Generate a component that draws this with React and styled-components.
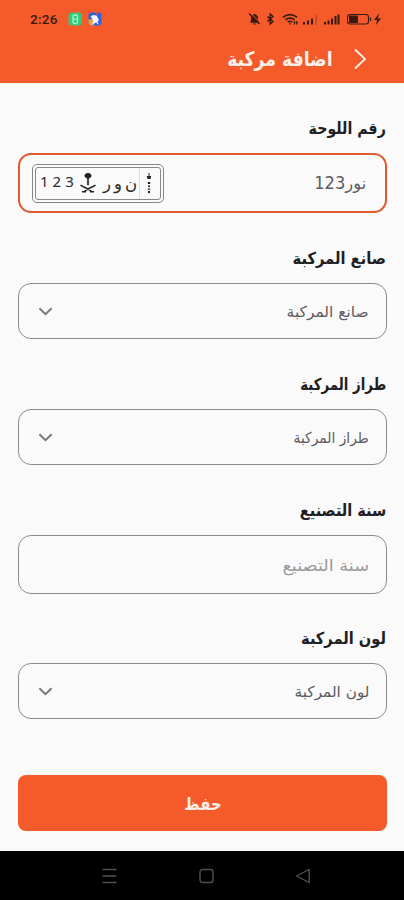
import styled, { createGlobalStyle } from 'styled-components';

const GlobalStyle = createGlobalStyle`
  * {
    box-sizing: border-box;
  }

  body {
    margin: 0;
    background-color: #fafafa;
    font-family: 'DejaVu Sans', sans-serif;
  }

  svg {
    display: block;
    flex-shrink: 0;
  }
`;

const Screen = styled.div`
  display: flex;
  flex-direction: column;
  width: 404px;
  height: 900px;
  overflow: hidden;
  background-color: #fafafa;
`;

const Header = styled.header`
  height: 83px;
  background-color: #f55a2a;
`;

const StatusBar = styled.div`
  display: flex;
  justify-content: space-between;
  height: 36px;
  padding: 1px 21px 0 30px;
`;

const StatusGroup = styled.div`
  display: flex;
  align-items: center;
`;

const Clock = styled.span`
  width: 38px;
  font-family: Roboto, sans-serif;
  font-size: 13.5px;
  font-weight: 500;
  letter-spacing: 0.3px;
  color: #3a1a10;
`;

const TitleRow = styled.div`
  display: flex;
  align-items: center;
  gap: 20px;
  height: 45px;
  padding-right: 37px;
  direction: rtl;
`;

const Text = styled.span`
  display: inline-block;
  white-space: nowrap;
  transform: scaleX(${props => props.$stretch || 1});
  transform-origin: ${props => props.$origin || 'right'} center;
`;

const Title = styled.h1`
  margin: 0;
  font-size: 20px;
  font-weight: 700;
  line-height: 28px;
  color: #fff0ea;
`;

const Form = styled.form`
  display: flex;
  flex-direction: column;
  gap: 33px;
  height: 768px;
  padding: 33px 17px 0 18px;
  direction: rtl;
`;

const Group = styled.div`
  display: flex;
  flex-direction: column;
  gap: 13px;
`;

const Label = styled.label`
  height: 24px;
  padding-right: 1px;
  font-size: 16.5px;
  font-weight: 700;
  line-height: 26px;
  color: #202022;
`;

const Field = styled.div`
  display: flex;
  align-items: center;
  justify-content: space-between;
  height: ${props => props.$height || 56}px;
  padding: 1px 17px 0 19px;
  border: ${props => (props.$active ? '2px solid #e0592f' : '1px solid #8c8c90')};
  border-radius: 13px;
  font-size: ${props => (props.$muted ? 16 : 15)}px;
  color: ${props => (props.$muted ? '#98989c' : '#5c5c60')};
`;

const PlateField = styled(Field)`
  padding: 0 19px 0 12px;
  font-size: 17px;
`;

const YearGroup = styled(Group)`
  margin-bottom: -1px;
`;

const Plate = styled.div`
  width: 132px;
  height: 39px;
  padding: 2px;
  border: 1.5px solid #858585;
  border-radius: 5px;
`;

const PlateInner = styled.div`
  display: flex;
  align-items: center;
  height: 100%;
  border: 1px solid #888;
  border-radius: 3px;
  direction: ltr;
  color: #2c2c2c;
`;

const PlateDigits = styled.span`
  width: 43px;
  padding: 0 0 4px 4px;
  font-family: 'Noto Sans', sans-serif;
  font-size: 15px;
  letter-spacing: 4px;
`;

const PlateLetters = styled.span`
  display: flex;
  justify-content: center;
  gap: 3px;
  width: 42px;
  padding-left: 4px;
  font-size: 16.5px;
  direction: rtl;
`;

const PlateStrip = styled.div`
  display: flex;
  align-items: center;
  justify-content: center;
  width: 19px;
  height: 100%;
  border-left: 1px solid #ddd;
`;

const SaveButton = styled.button`
  height: 56px;
  margin-top: 23px;
  padding: 1px 0 0;
  border: 0;
  border-radius: 8px;
  background-color: #f55a2a;
  font-family: inherit;
  font-size: 17.5px;
  font-weight: 700;
  color: #fff0ea;
`;

const NavBar = styled.nav`
  display: flex;
  align-items: center;
  justify-content: space-between;
  height: 49px;
  padding: 0 93px 0 102px;
  background-color: #000;
`;

const Chevron = () => (
  <svg width="15" height="9" viewBox="0 0 15 9" fill="none" stroke="#77777b" strokeWidth="1.9">
    <path d="M1.4 1.2 7.5 7.2 13.6 1.2" />
  </svg>
);

const StatusIcons = () => (
  <svg width="136" height="18" viewBox="0 0 136 18" fill="none" stroke="#3a1a10">
    <path d="M3.5 12.2c1-1.4 1-2 1-4 0-2.2 1.2-3.7 3-3.7s3 1.5 3 3.7c0 2 0 2.6 1.2 4zM6.2 14h2.6" fill="#3a1a10" strokeWidth="1" />
    <path d="M3.5 3 14 13.5" stroke="#f55a2a" strokeWidth="1" />
    <path d="M2 3.5 12.5 14" strokeWidth="1.4" />
    <path d="M20.5 6.5 26 11.5 23.2 14V4L26 6.5 20.5 11.5" strokeWidth="1.4" />
    <g transform="translate(2 0)">
      <path d="M34 7.2q7-5.2 14 0M36.500 9.700q4.500-3.300 9 0M38.800 12q2.200-1.500 4.400 0" strokeWidth="1.7" />
      <path d="M41 14.5V13M45.500 11v3.500M47.800 11v3.500" strokeWidth="1.3" />
      <path d="M55 14.500V12M59 14.500v-4M63 14.500v-6" strokeWidth="2" />
      <path d="M67 14.500v-10" strokeWidth="1.5" opacity=".3" />
      <path d="M76 14.500V12M79.500 14.500v-4M83 14.500v-6M86.500 14.500V6M89.500 14.500v-10" strokeWidth="2" />
      <rect x="98.500" y="4.500" width="21" height="9.500" rx="2.500" strokeWidth="1.1" />
      <path d="M100 5.500h9V13h-9z" fill="#3a1a10" stroke="none" />
      <path d="M121.500 7.500V11" strokeWidth="1.2" />
      <path d="M130 3.500 125 10h3l-1 5 5-6.500h-3z" fill="#3a1a10" stroke="none" />
    </g>
  </svg>
);

const AppBadges = () => (
  <svg width="34" height="14" viewBox="0 0 34 14">
    <rect x="0.5" y="0.5" width="13.5" height="13" rx="3.5" fill="#2fcb78" />
    <rect x="5" y="3" width="4.5" height="8.5" rx="1.5" fill="none" stroke="#b4f0cc" strokeWidth="1.3" />
    <path d="M5 7.2h4.5" stroke="#b4f0cc" />
    <rect x="20.5" y="0.5" width="13" height="13" rx="3" fill="#2f62dc" />
    <path d="M20.5 7.5 25 7l1 6.500h-2.500a3 3 0 0 1-3-3z" fill="#e8a13c" />
    <path d="M22.500 4.500 25 3l3.500.5L31 8l-1.500 1.500 1.500 3.500-3-2.500-3.500 2 .5-4.500z" fill="#f2f4ff" />
    <path d="M27 .5h3L28.500 3z" fill="#e84b4b" />
  </svg>
);

const Emblem = () => (
  <svg width="18" height="22" viewBox="0 0 18 22" fill="none" stroke="#222">
    <path d="M6 4.800c-.8-2 .8-3.500 3-3.500s3.800 1.500 3 3.500L9.600 6.500V13H8.400V6.500z" fill="#222" strokeWidth=".6" />
    <path d="M1.500 13c2.500 2.500 8 3 11.500 7M16.500 13c-2.500 2.500-8 3-11.500 7M3 19.800h4M15 19.800h-4" strokeWidth="1.5" />
  </svg>
);

const StripMark = () => (
  <svg width="8" height="24" viewBox="0 0 8 24" fill="#222">
    <path d="M3.500 2h1v3l1.700 0L5.500 8h-3L1.800 5h1.700z" />
    <path d="M2.800 11h2.400v2H2.800zM3 14.500h2V16H3zM2.800 17.500h2.400v1.300H2.800z" />
    <circle cx="4" cy="21" r="1.2" />
  </svg>
);

const NavMenu = () => (
  <svg width="16" height="16" viewBox="0 0 16 16" stroke="#505050" strokeWidth="1.7">
    <path d="M.5 1.500h14M.5 8h14M.5 14.500h14" />
  </svg>
);

const NavHome = () => (
  <svg width="16" height="16" viewBox="0 0 16 16" fill="none" stroke="#505050" strokeWidth="1.4">
    <rect x="1" y="1.5" width="13" height="13" rx="2.5" />
  </svg>
);

const NavBack = () => (
  <svg width="16" height="16" viewBox="0 0 16 16" fill="none" stroke="#505050" strokeWidth="1.4" strokeLinejoin="round">
    <path d="M14.200 1.500v13L1.500 8z" />
  </svg>
);

const SelectGroup = ({ text, stretch, innerStretch }) => (
  <Group>
    <Label><Text $stretch={stretch}>{text}</Text></Label>
    <Field>
      <Text $stretch={innerStretch}>{text}</Text>
      <Chevron />
    </Field>
  </Group>
);

const App = () => (
  <Screen>
    <GlobalStyle />
    <Header>
      <StatusBar>
        <StatusGroup>
          <Clock>2:26</Clock>
          <AppBadges />
        </StatusGroup>
        <StatusGroup>
          <StatusIcons />
        </StatusGroup>
      </StatusBar>
      <TitleRow>
        <svg width="14" height="22" viewBox="0 0 14 22" fill="none" stroke="#fff0e8" strokeWidth="1.8">
          <path d="M2 1.500 12 11 2 20.500" />
        </svg>
        <Title><Text $stretch={0.86}>اضافة مركبة</Text></Title>
      </TitleRow>
    </Header>
    <Form>
      <Group>
        <Label><Text $stretch={0.86}>رقم اللوحة</Text></Label>
        <PlateField $active $height={60}>
          <Text $stretch={0.96}>نور123</Text>
          <Plate>
            <PlateInner>
              <PlateDigits>123</PlateDigits>
              <Emblem />
              <PlateLetters>
                <span>ن</span>
                <span>و</span>
                <span>ر</span>
              </PlateLetters>
              <PlateStrip><StripMark /></PlateStrip>
            </PlateInner>
          </Plate>
        </PlateField>
      </Group>
      <SelectGroup text="صانع المركبة" stretch={0.89} innerStretch={1.03} />
      <SelectGroup text="طراز المركبة" stretch={0.81} innerStretch={0.92} />
      <YearGroup>
        <Label><Text $stretch={0.88}>سنة التصنيع</Text></Label>
        <Field $muted $height={59}>
          <Text $stretch={1.11}>سنة التصنيع</Text>
        </Field>
      </YearGroup>
      <SelectGroup text="لون المركبة" stretch={0.885} innerStretch={1.02} />
      <SaveButton type="button"><Text $origin="center" $stretch={0.85}>حفظ</Text></SaveButton>
    </Form>
    <NavBar>
      <NavMenu />
      <NavHome />
      <NavBack />
    </NavBar>
  </Screen>
);

export default App;
